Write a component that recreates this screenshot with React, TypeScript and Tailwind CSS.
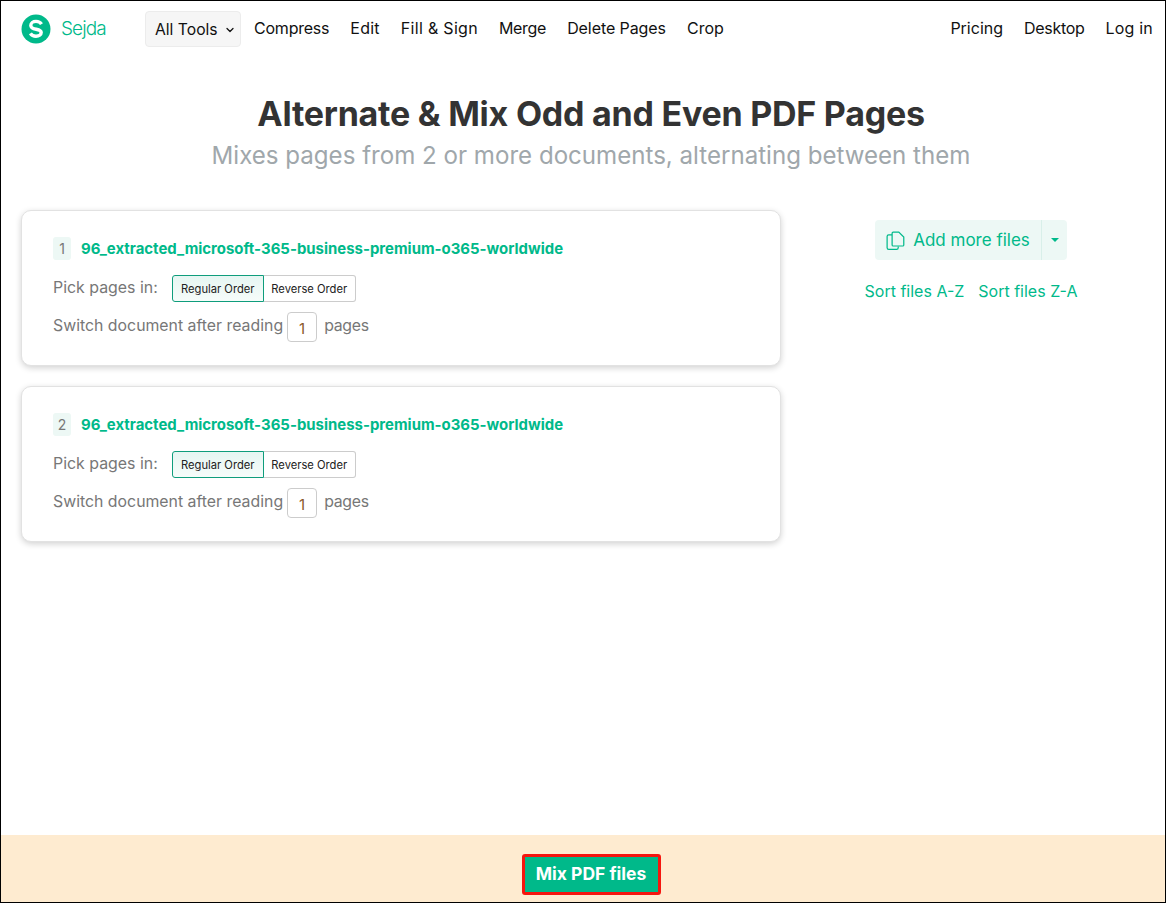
import React from "react";
import { ChevronDown } from "lucide-react";

const leftLinks = [
  { label: "Compress", cls: "tracking-[-0.22px]" },
  { label: "Edit", cls: "tracking-[0.25px]" },
  { label: "Fill & Sign", cls: "tracking-[0.3px]" },
  { label: "Merge", cls: "tracking-[-0.3px]" },
  { label: "Delete Pages", cls: "tracking-[-0.08px]" },
  { label: "Crop", cls: "" },
];

const rightLinks = [
  { label: "Pricing", cls: "" },
  { label: "Desktop", cls: "tracking-[-0.3px]" },
  { label: "Log in", cls: "tracking-[0.2px]" },
];

const FileCard = ({ index }: { index: number }) => (
  <div className="w-[760px] h-[156px] rounded-[10px] border border-[#e2e2e2] bg-white shadow-[0_2px_6px_rgba(0,0,0,0.18)] pl-[31px] pt-[26px]">
    <div className="flex items-center h-[23px]">
      <span className="w-[18px] h-[23px] rounded-[3px] bg-[#edf8f5] text-[14px] text-[#777] flex items-center justify-center">
        {index}
      </span>
      <span className="ml-[10px] pt-[2px] text-[14.95px] font-bold text-[#00b98a] whitespace-nowrap">
        96_extracted_microsoft-365-business-premium-o365-worldwide
      </span>
    </div>
    <div className="flex items-center mt-[15px] h-[27px]">
      <span className="pb-[1px] text-[15.9px] text-[#777]">Pick pages in:</span>
      <div className="flex ml-[14px] h-[27px] text-[11.2px] text-[#222]">
        <span className="w-[92px] pt-[1px] flex items-center justify-center rounded-l-[3px] border border-[#0f9d7c] bg-gradient-to-b from-[#e6f6f2] to-[#f6fcfa]">
          Regular Order
        </span>
        <span className="w-[92px] pt-[1px] flex items-center justify-center rounded-r-[3px] border border-l-0 border-[#ccc]">
          Reverse Order
        </span>
      </div>
    </div>
    <div className="flex items-center mt-[10px] h-[30px] text-[15.85px] text-[#777]">
      <span className="pb-[2px]">Switch document after reading</span>
      <span className="ml-[4px] w-[30px] h-[30px] rounded-[4px] border border-[#ccc] flex items-center justify-center text-[#8a5a2b] pt-[4px] text-[15px]">
        1
      </span>
      <span className="ml-[7px] pb-[2px] tracking-[-0.3px]">pages</span>
    </div>
  </div>
);

export default function App() {
  return (
    <div className="w-[1166px] h-[903px] border border-black bg-white flex flex-col font-['Inter',sans-serif] overflow-hidden">
      <header className="flex items-center h-[56px] pl-[20px] pr-[12px] shrink-0">
        <svg width="30" height="30" viewBox="0 0 30 30" className="shrink-0">
          <circle cx="15" cy="15" r="14.5" fill="#00b98a" />
          <path
            d="M20.500 10.200c-1-1.700-3-2.800-5.500-2.800-3 0-5.200 1.600-5.200 4 0 5.200 10.400 2.600 10.400 7.200 0 2.100-2.100 3.600-5.200 3.600-2.500 0-4.500-1.100-5.600-2.900"
            fill="none"
            stroke="#fff"
            strokeWidth="3.4"
          />
        </svg>
        <span className="ml-[10px] w-[45px] text-[19px] font-light tracking-[-0.9px] text-[#00b98a]">Sejda</span>
        <button className="ml-[39px] w-[96px] h-[36px] rounded-[4px] border border-[#ececec] bg-[#f6f6f6] flex items-center pl-[9px] pt-[2px] text-[15.7px] text-[#111]">
          All Tools
          <ChevronDown size={12} className="ml-[6px]" strokeWidth={2.5} />
        </button>
        <nav className="flex items-center gap-[21px] ml-[13px] pb-[2px] text-[16px] leading-[20px] text-[#111]">
          {leftLinks.map((l) => (
            <a key={l.label} className={l.cls}>
              {l.label}
            </a>
          ))}
        </nav>
        <nav className="flex items-center gap-[21px] ml-auto pb-[2px] text-[16px] leading-[20px] text-[#111]">
          {rightLinks.map((l) => (
            <a key={l.label} className={l.cls}>
              {l.label}
            </a>
          ))}
        </nav>
      </header>

      <div className="flex flex-col items-center shrink-0 pt-[35px] pl-[16px]">
        <h1 className="text-[34px] leading-[44px] font-bold tracking-[-0.24px] text-[#333]">
          Alternate &amp; Mix Odd and Even PDF Pages
        </h1>
        <p className="mt-[4px] text-[24.1px] leading-[32px] text-[#a0a7ab]">
          Mixes pages from 2 or more documents, alternating between them
        </p>
      </div>

      <main className="flex flex-1 pl-[20px] pt-[38px]">
        <div className="flex flex-col gap-[20px]">
          <FileCard index={1} />
          <FileCard index={2} />
        </div>
        <div className="ml-[83px] flex flex-col items-center w-[214px] pt-[10px]">
          <div className="flex h-[40px] rounded-[4px] bg-[#edf8f5] text-[#00b98a]">
            <button className="w-[167px] flex items-center justify-center gap-[7px] text-[17px] pt-[1px] border-r border-[#d8efe9]">
              <svg width="20" height="20" viewBox="0 0 18 18" fill="none" stroke="currentColor" strokeWidth="1.1">
                <path d="M5.5 3.500H2.500a1.500 1.500 0 0 0-1.500 1.500v10a1.500 1.500 0 0 0 1.500 1.500h7a1.500 1.500 0 0 0 1.500-1.500v-1" />
                <path d="M5.500 2a1 1 0 0 1 1-1h5l4.500 4.500V12.500a1 1 0 0 1-1 1h-8.500a1 1 0 0 1-1-1z" />
              </svg>
              Add more files
            </button>
            <button className="w-[25px] flex items-center justify-center">
              <span className="w-0 h-0 border-l-[4px] border-r-[4px] border-t-[4px] border-l-transparent border-r-transparent border-t-[#00b98a]" />
            </button>
          </div>
          <div className="flex gap-[14px] mt-[19px] text-[16px] text-[#00b98a] whitespace-nowrap">
            <a>Sort files A-Z</a>
            <a>Sort files Z-A</a>
          </div>
        </div>
      </main>

      <footer className="h-[67px] shrink-0 bg-[#feebd0] flex items-start justify-center pt-[19px] pl-[16px]">
        <button className="w-[139px] h-[41px] border-[3px] border-[#f5160f] rounded-[3px] bg-[#00b98a] text-white font-bold text-[17.5px]">
          Mix PDF files
        </button>
      </footer>
    </div>
  );
}
